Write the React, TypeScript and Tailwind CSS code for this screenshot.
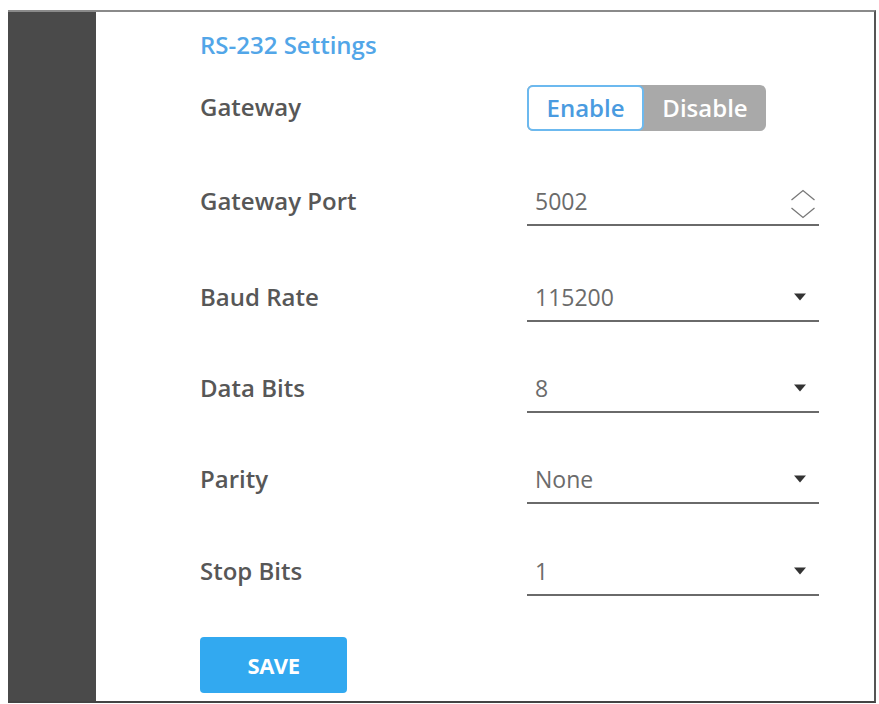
import React from "react";

function Caret() {
  return (
    <svg width="14" height="8" viewBox="0 0 14 8" className="shrink-0">
      <path d="M1 0.5 L13 0.5 L7 7.5 Z" fill="#333" />
    </svg>
  );
}

function Spinner() {
  return (
    <svg width="26" height="30" viewBox="0 0 26 30" className="shrink-0">
      <path d="M1.5 11 L13 1.5 L24.5 11" fill="none" stroke="#777" strokeWidth="1.3" />
      <path d="M1.5 19 L13 28.5 L24.5 19" fill="none" stroke="#777" strokeWidth="1.3" />
    </svg>
  );
}

function Field({ value, spinner }: { value: string; spinner?: boolean }) {
  return (
    <div className="w-[292px] h-[48px] border-b-2 border-[#6a6a6a] flex items-center justify-between pl-[8px] pr-[12px]">
      <span className="text-[23px] text-[#6b6b6b]">{value}</span>
      {spinner ? (
        <div className="-mr-[9px] mt-[5px]">
          <Spinner />
        </div>
      ) : (
        <Caret />
      )}
    </div>
  );
}

function Row({ label, children, mt }: { label: string; children: React.ReactNode; mt: string }) {
  return (
    <div className={`flex items-center ${mt}`}>
      <div className="w-[327px] text-[24px] font-semibold text-[#575757] -mt-[2px]">{label}</div>
      {children}
    </div>
  );
}

export default function App() {
  return (
    <div className="w-[879px] h-[704px] bg-white overflow-hidden font-['Open_Sans',sans-serif]">
      <div className="ml-[8px] mt-[10px] w-[868px] h-[693px] flex border-t-2 border-t-[#8a8a8a] border-r-2 border-r-[#555] border-b-2 border-b-[#444]">
        <div className="w-[88px] bg-[#4a4a4a] shrink-0" />
        <div className="flex-1 pl-[104px] pt-[18px]">
          <div className="text-[24px] font-semibold text-[#52a6e8] leading-[30px]">RS-232 Settings</div>
          <Row label="Gateway" mt="mt-[25px]">
            <div className="flex h-[46px] w-[239px] rounded-[6px] bg-[#a9a9a9]">
              <div className="w-[117px] h-full rounded-[6px] border-2 border-[#6cb9ef] bg-white flex items-center justify-center text-[24px] font-semibold text-[#4a9be0]">
                Enable
              </div>
              <div className="flex-1 flex items-center justify-center text-[24px] font-semibold text-white">
                Disable
              </div>
            </div>
          </Row>
          <Row label="Gateway Port" mt="mt-[47px]">
            <Field value="5002" spinner />
          </Row>
          <Row label="Baud Rate" mt="mt-[48px]">
            <Field value="115200" />
          </Row>
          <Row label="Data Bits" mt="mt-[43px]">
            <Field value="8" />
          </Row>
          <Row label="Parity" mt="mt-[43px]">
            <Field value="None" />
          </Row>
          <Row label="Stop Bits" mt="mt-[44px]">
            <Field value="1" />
          </Row>
          <button className="mt-[41px] w-[147px] h-[56px] rounded-[4px] bg-[#32a9f0] text-white text-[22px] font-bold tracking-[-0.5px]">
            SAVE
          </button>
        </div>
      </div>
    </div>
  );
}
